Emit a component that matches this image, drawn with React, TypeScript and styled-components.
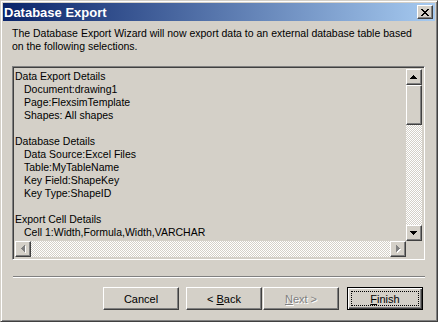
import React from 'react';
import styled, { createGlobalStyle, css } from 'styled-components';

const FACE = '#d4d0c8';

const GlobalStyle = createGlobalStyle`
  html, body {
    margin: 0;
    padding: 0;
    background: ${FACE};
  }
  * {
    box-sizing: border-box;
  }
`;

const raised = css`
  border: 1px solid;
  border-color: #fff #404040 #404040 #fff;
  box-shadow: inset -1px -1px 0 #808080, inset 1px 1px 0 ${FACE};
`;

const Window = styled.div`
  width: 438px;
  height: 322px;
  background: ${FACE};
  border: 1px solid;
  border-color: ${FACE} #404040 #404040 ${FACE};
  box-shadow: inset 1px 1px 0 #fff, inset -1px -1px 0 #808080;
  padding: 2px;
  display: flex;
  flex-direction: column;
  font-family: 'Liberation Sans', Arial, sans-serif;
  font-size: 10.5px;
  color: #000;
`;

const TitleBar = styled.div`
  height: 18px;
  flex: none;
  display: flex;
  align-items: center;
  justify-content: space-between;
  padding: 0 2px 0 1px;
  background: linear-gradient(to right, #0a246a, #a6caf0);
`;

const TitleText = styled.span`
  color: #fff;
  font-weight: bold;
  font-size: 13px;
`;

const CloseButton = styled.div`
  width: 16px;
  height: 14px;
  background: ${FACE};
  ${raised};
  display: flex;
  align-items: center;
  justify-content: center;
`;

const Body = styled.div`
  flex: 1;
  display: flex;
  flex-direction: column;
  padding: 6px 8px 0 9px;
`;

const Intro = styled.p`
  margin: 0;
  max-width: 410px;
  line-height: 13px;
  height: 39px;
`;

const ListBox = styled.div`
  width: 413px;
  height: 194px;
  border: 1px solid;
  border-color: #808080 #fff #fff #808080;
  box-shadow: inset 1px 1px 0 #404040, inset -1px -1px 0 ${FACE};
  padding: 2px;
  display: grid;
  grid-template-columns: 1fr 16px;
  grid-template-rows: 1fr 16px;
`;

const ListContent = styled.div`
  overflow: hidden;
  padding: 1px 0 0 0;
`;

const Line = styled.div<{ $indent?: boolean }>`
  height: 13px;
  line-height: 13px;
  white-space: pre;
  padding-left: ${p => (p.$indent ? '9px' : '0')};
`;

const Dither = styled.div`
  flex: 1;
  background: repeating-conic-gradient(#fff 0 25%, ${FACE} 0 50%) 0 0 / 2px 2px;
`;

const VScroll = styled.div`
  display: flex;
  flex-direction: column;
`;

const HScroll = styled.div`
  display: flex;
`;

const Corner = styled.div`
  background: ${FACE};
`;

const ArrowButton = styled.div`
  width: 16px;
  height: 16px;
  flex: none;
  background: ${FACE};
  ${raised};
  display: flex;
  align-items: center;
  justify-content: center;
`;

const Thumb = styled.div`
  width: 16px;
  height: 40px;
  flex: none;
  background: ${FACE};
  ${raised};
`;

const Separator = styled.div`
  margin: 16px 0 0 1px;
  width: 412px;
  height: 2px;
  border-top: 1px solid #808080;
  border-bottom: 1px solid #fff;
`;

const ButtonRow = styled.div`
  display: flex;
  justify-content: flex-end;
  margin-top: 9px;
  padding-right: 4px;
`;

const Button = styled.div<{ $gap?: number; $default?: boolean; $disabled?: boolean }>`
  width: 76px;
  height: 23px;
  margin-left: ${p => p.$gap ?? 0}px;
  background: ${FACE};
  display: flex;
  align-items: center;
  justify-content: center;
  position: relative;
  font-size: 11px;
  ${p =>
    p.$default
      ? css`
          border: 1px solid #000;
          box-shadow: inset 1px 1px 0 #fff, inset -1px -1px 0 #404040, inset -2px -2px 0 #808080;
        `
      : raised};
  ${p =>
    p.$disabled &&
    css`
      color: #808080;
      text-shadow: 1px 1px 0 #fff;
    `}
`;

const Focus = styled.div`
  position: absolute;
  inset: 3px;
  border: 1px dotted #000;
`;

const Key = styled.span`
  text-decoration: underline;
`;

const XIcon = () => (
  <svg width="8" height="7" viewBox="0 0 8 7" shapeRendering="crispEdges">
    <path
      d="M0 0h2v1h-2zM6 0h2v1h-2zM1 1h2v1h-2zM5 1h2v1h-2zM2 2h4v1h-4zM3 3h2v1h-2zM2 4h4v1h-4zM1 5h2v1h-2zM5 5h2v1h-2zM0 6h2v1h-2zM6 6h2v1h-2z"
      fill="#000"
    />
  </svg>
);

const Arrow = ({ dir, disabled }: { dir: 'up' | 'down' | 'left' | 'right'; disabled?: boolean }) => {
  const color = disabled ? '#808080' : '#000';
  const shapes: Record<string, { w: number; h: number; d: string }> = {
    up: { w: 7, h: 4, d: 'M3 0h1v1h1v1h1v1h1v1h-7v-1h1v-1h1v-1h1z' },
    down: { w: 7, h: 4, d: 'M0 0h7v1h-1v1h-1v1h-1v1h-1v-1h-1v-1h-1v-1h-1z' },
    left: { w: 4, h: 7, d: 'M3 0h1v7h-1v-1h-1v-1h-1v-1h-1v-1h1v-1h1v-1h1z' },
    right: { w: 4, h: 7, d: 'M0 0h1v1h1v1h1v1h1v1h-1v1h-1v1h-1v1h-1z' },
  };
  const s = shapes[dir];
  return (
    <svg width={s.w + 1} height={s.h + 1} viewBox={`0 0 ${s.w + 1} ${s.h + 1}`} shapeRendering="crispEdges">
      {disabled && <path d={s.d} fill="#fff" transform="translate(1 1)" />}
      <path d={s.d} fill={color} />
    </svg>
  );
};

const lines: { text: string; indent?: boolean }[] = [
  { text: 'Data Export Details' },
  { text: 'Document:drawing1', indent: true },
  { text: 'Page:FlexsimTemplate', indent: true },
  { text: 'Shapes: All shapes', indent: true },
  { text: '' },
  { text: 'Database Details' },
  { text: 'Data Source:Excel Files', indent: true },
  { text: 'Table:MyTableName', indent: true },
  { text: 'Key Field:ShapeKey', indent: true },
  { text: 'Key Type:ShapeID', indent: true },
  { text: '' },
  { text: 'Export Cell Details' },
  { text: 'Cell 1:Width,Formula,Width,VARCHAR', indent: true },
];

export default function App() {
  return (
    <>
      <GlobalStyle />
      <Window>
        <TitleBar>
          <TitleText>Database Export</TitleText>
          <CloseButton>
            <XIcon />
          </CloseButton>
        </TitleBar>
        <Body>
          <Intro>
            The Database Export Wizard will now export data to an external database table based on the following
            selections.
          </Intro>
          <ListBox>
            <ListContent>
              {lines.map((l, i) => (
                <Line key={i} $indent={l.indent}>
                  {l.text}
                </Line>
              ))}
            </ListContent>
            <VScroll>
              <ArrowButton>
                <Arrow dir="up" />
              </ArrowButton>
              <Thumb />
              <Dither />
              <ArrowButton>
                <Arrow dir="down" />
              </ArrowButton>
            </VScroll>
            <HScroll>
              <ArrowButton>
                <Arrow dir="left" disabled />
              </ArrowButton>
              <Dither />
              <ArrowButton>
                <Arrow dir="right" disabled />
              </ArrowButton>
            </HScroll>
            <Corner />
          </ListBox>
          <Separator />
          <ButtonRow>
            <Button>Cancel</Button>
            <Button $gap={7}>
              &lt;&nbsp;<Key>B</Key>ack
            </Button>
            <Button $gap={1} $disabled>
              <Key>N</Key>ext&nbsp;&gt;
            </Button>
            <Button $gap={8} $default>
              <Focus />
              <Key>F</Key>inish
            </Button>
          </ButtonRow>
        </Body>
      </Window>
    </>
  );
}
